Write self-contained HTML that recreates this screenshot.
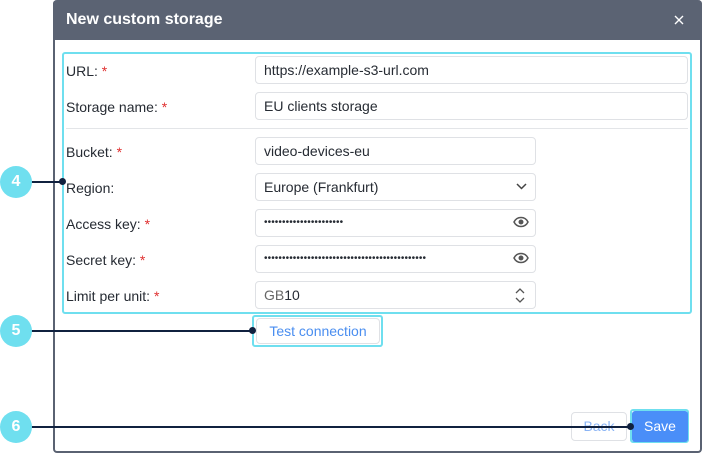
<!DOCTYPE html><html><head><style>
body{margin:0;width:702px;height:454px;background:#fff;position:relative;overflow:hidden;font-family:"Liberation Sans",Roboto,sans-serif;font-size:14px;color:#262b33}
.a{position:absolute}
.dlg{left:53px;top:0;width:645px;height:451px;border:2px solid #5a6272;border-top:none;border-radius:4px}
.hd{left:53px;top:0;width:649px;height:40px;background:#5b6373;border-radius:4px 4px 0 0;color:#fff;font-size:16px;font-weight:bold}
.in{border:1px solid #dfe1e5;border-radius:4px;box-sizing:border-box;height:28px;line-height:26px;padding-left:8px;background:#fff}
.lb{left:66px}
.r{color:#e03030}
.c{width:32px;height:32px;border-radius:50%;background:#6fdfef;color:#fff;font-weight:bold;font-size:16px;text-align:center;line-height:32px;left:0}
.ln{height:2px;background:#10213f;left:30px}
.dot{width:7px;height:7px;border-radius:50%;background:#10213f}
.dots{letter-spacing:0.1px;font-size:10px}
</style></head><body>
<div class="a dlg"></div>
<div class="a hd"><span class="a" style="left:13px;top:11px">New custom storage</span><svg class="a" style="left:621px;top:15px" width="10" height="10"><path d="M1 1l8 8M9 1l-8 8" stroke="#fff" stroke-width="1.4"/></svg></div>
<div class="a" style="left:62px;top:52px;width:626px;height:258px;border:2px solid #6fdfef;border-radius:3px"></div>
<div class="a lb" style="top:63px">URL: <span class="r">*</span></div>
<div class="a in" style="left:255px;top:56px;width:433px">https://example-s3-url.com</div>
<div class="a lb" style="top:99px">Storage name: <span class="r">*</span></div>
<div class="a in" style="left:255px;top:92px;width:433px">EU clients storage</div>
<div class="a" style="left:66px;top:128px;width:622px;height:1px;background:#e3e5e8"></div>
<div class="a lb" style="top:144px">Bucket: <span class="r">*</span></div>
<div class="a in" style="left:255px;top:137px;width:281px">video-devices-eu</div>
<div class="a lb" style="top:180px">Region:</div>
<div class="a in" style="left:255px;top:173px;width:281px">Europe (Frankfurt)<svg class="a" style="left:260px;top:9px" width="11" height="8"><path d="M1 1l4.5 4.5L10 1" stroke="#444" stroke-width="1.5" fill="none"/></svg></div>
<div class="a lb" style="top:216px">Access key: <span class="r">*</span></div>
<div class="a in dots" style="left:255px;top:209px;width:281px">••••••••••••••••••••••</div>
<div class="a lb" style="top:252px">Secret key: <span class="r">*</span></div>
<div class="a in dots" style="left:255px;top:245px;width:281px">•••••••••••••••••••••••••••••••••••••••••••••</div>
<svg class="a" style="left:513px;top:216px" width="16" height="12"><path d="M1 6C4 0 12 0 15 6C12 12 4 12 1 6Z" stroke="#555" stroke-width="1.5" fill="none"/><circle cx="8" cy="6" r="2.5" fill="#555"/></svg>
<svg class="a" style="left:513px;top:252px" width="16" height="12"><path d="M1 6C4 0 12 0 15 6C12 12 4 12 1 6Z" stroke="#555" stroke-width="1.5" fill="none"/><circle cx="8" cy="6" r="2.5" fill="#555"/></svg>
<div class="a lb" style="top:288px">Limit per unit: <span class="r">*</span></div>
<div class="a in" style="left:255px;top:281px;width:281px"><span style="color:#666">GB</span>10<svg class="a" style="left:259px;top:6px" width="10" height="15"><path d="M1 5l4-4 4 4M1 10l4 4 4-4" stroke="#555" stroke-width="1.3" fill="none"/></svg></div>
<div class="a" style="left:252px;top:315px;width:127px;height:28px;border:2px solid #6fdfef;border-radius:3px"></div>
<div class="a in" style="left:256px;top:318px;width:124px;height:26px;line-height:24px;padding:0;text-align:center;color:#4a8ef0">Test connection</div>
<div class="a in" style="left:571px;top:412px;width:56px;height:29px;padding:0;text-align:center;color:#8ab4f5">Back</div>
<div class="a" style="left:630px;top:409px;width:55px;height:30px;border:2px solid #6fdfef;border-radius:3px"></div>
<div class="a" style="left:632px;top:411px;width:56px;height:31px;background:#4a8ef8;border-radius:3px;color:#fff;text-align:center;line-height:31px">Save</div>
<div class="a ln" style="top:181px;width:32px"></div><div class="a dot" style="left:59px;top:178px"></div>
<div class="a ln" style="top:330px;width:223px"></div><div class="a dot" style="left:249px;top:327px"></div>
<div class="a ln" style="top:426px;width:600px"></div><div class="a dot" style="left:627px;top:423px"></div>
<div class="a c" style="top:166px">4</div>
<div class="a c" style="top:315px">5</div>
<div class="a c" style="top:411px">6</div>
</body></html>
